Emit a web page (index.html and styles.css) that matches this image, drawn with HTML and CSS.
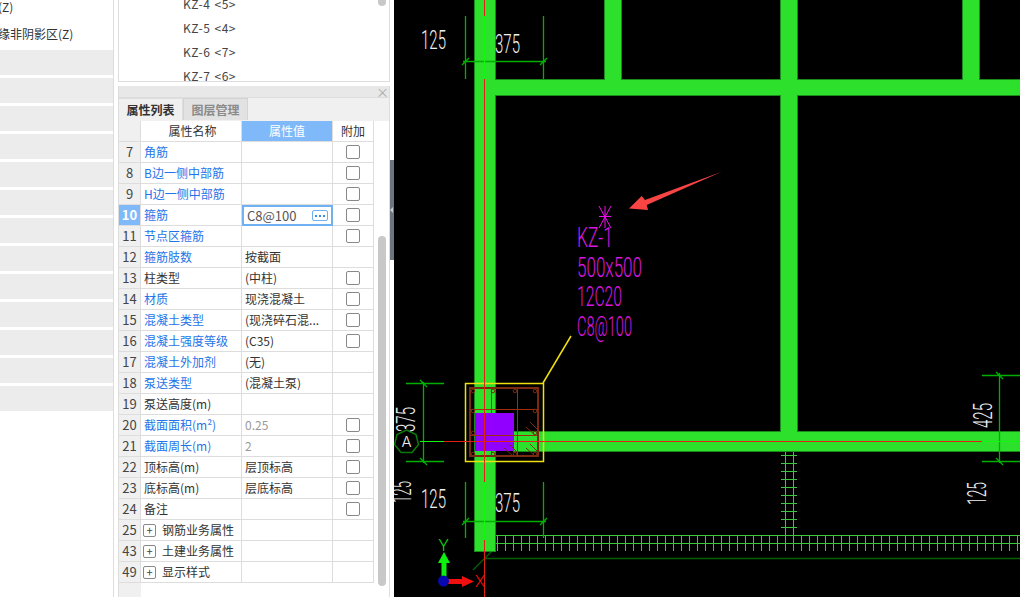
FILE: index.html
```html
<!DOCTYPE html>
<html lang="zh-CN">
<head>
<meta charset="utf-8">
<title>属性列表</title>
<link rel="stylesheet" href="styles.css">
</head>
<body>
<div class="app">
  <aside class="left">
    <div class="tree-text first">(Z)</div>
    <div class="tree-text second">缘非阴影区(Z)</div>
    <div class="bars">
      <div class="bar"></div><div class="bar"></div><div class="bar"></div><div class="bar"></div><div class="bar"></div>
      <div class="bar"></div><div class="bar"></div><div class="bar"></div><div class="bar"></div><div class="bar"></div>
      <div class="bar"></div><div class="bar"></div><div class="bar"></div>
    </div>
  </aside>
  <section class="mid">
    <div class="list">
      <div class="list-items">
        <div class="list-item">KZ-4 &lt;5&gt;</div>
        <div class="list-item">KZ-5 &lt;4&gt;</div>
        <div class="list-item">KZ-6 &lt;7&gt;</div>
        <div class="list-item">KZ-7 &lt;6&gt;</div>
      </div>
      <div class="list-thumb"></div>
    </div>
    <div class="props">
      <div class="props-head"><span class="close">×</span></div>
      <div class="tabs">
        <div class="tab active">属性列表</div>
        <div class="tab">图层管理</div>
      </div>
      <div class="props-body">
        <div class="table">
          <div class="row header"><div class="c num"></div><div class="c name center">属性名称</div><div class="c val hl">属性值</div><div class="c add center">附加</div></div>
          <div class="row"><div class="c num">7</div><div class="c name blue">角筋</div><div class="c val"></div><div class="c add"><i class="cb"></i></div></div>
          <div class="row"><div class="c num">8</div><div class="c name blue">B边一侧中部筋</div><div class="c val"></div><div class="c add"><i class="cb"></i></div></div>
          <div class="row"><div class="c num">9</div><div class="c name blue">H边一侧中部筋</div><div class="c val"></div><div class="c add"><i class="cb"></i></div></div>
          <div class="row"><div class="c num sel">10</div><div class="c name blue">箍筋</div><div class="c val editing"><span>C8@100</span><b class="more"><svg class="dots" width="10" height="2" viewBox="0 0 10 2"><rect x="0" width="2" height="2"/><rect x="4" width="2" height="2"/><rect x="8" width="2" height="2"/></svg></b></div><div class="c add"><i class="cb"></i></div></div>
          <div class="row"><div class="c num">11</div><div class="c name blue">节点区箍筋</div><div class="c val"></div><div class="c add"><i class="cb"></i></div></div>
          <div class="row"><div class="c num">12</div><div class="c name blue">箍筋肢数</div><div class="c val">按截面</div><div class="c add"></div></div>
          <div class="row"><div class="c num">13</div><div class="c name">柱类型</div><div class="c val">(中柱)</div><div class="c add"><i class="cb"></i></div></div>
          <div class="row"><div class="c num">14</div><div class="c name blue">材质</div><div class="c val">现浇混凝土</div><div class="c add"><i class="cb"></i></div></div>
          <div class="row"><div class="c num">15</div><div class="c name blue">混凝土类型</div><div class="c val">(现浇碎石混...</div><div class="c add"><i class="cb"></i></div></div>
          <div class="row"><div class="c num">16</div><div class="c name blue">混凝土强度等级</div><div class="c val">(C35)</div><div class="c add"><i class="cb"></i></div></div>
          <div class="row"><div class="c num">17</div><div class="c name blue">混凝土外加剂</div><div class="c val">(无)</div><div class="c add"></div></div>
          <div class="row"><div class="c num">18</div><div class="c name blue">泵送类型</div><div class="c val">(混凝土泵)</div><div class="c add"></div></div>
          <div class="row"><div class="c num">19</div><div class="c name">泵送高度(m)</div><div class="c val"></div><div class="c add"></div></div>
          <div class="row"><div class="c num">20</div><div class="c name blue">截面面积(m²)</div><div class="c val grey">0.25</div><div class="c add"><i class="cb"></i></div></div>
          <div class="row"><div class="c num">21</div><div class="c name blue">截面周长(m)</div><div class="c val grey">2</div><div class="c add"><i class="cb"></i></div></div>
          <div class="row"><div class="c num">22</div><div class="c name">顶标高(m)</div><div class="c val">层顶标高</div><div class="c add"><i class="cb"></i></div></div>
          <div class="row"><div class="c num">23</div><div class="c name">底标高(m)</div><div class="c val">层底标高</div><div class="c add"><i class="cb"></i></div></div>
          <div class="row"><div class="c num">24</div><div class="c name">备注</div><div class="c val"></div><div class="c add"><i class="cb"></i></div></div>
          <div class="row"><div class="c num">25</div><div class="c name"><i class="plus">+</i>钢筋业务属性</div><div class="c val"></div><div class="c add"></div></div>
          <div class="row"><div class="c num">43</div><div class="c name"><i class="plus">+</i>土建业务属性</div><div class="c val"></div><div class="c add"></div></div>
          <div class="row"><div class="c num">49</div><div class="c name"><i class="plus">+</i>显示样式</div><div class="c val"></div><div class="c add"></div></div>
          <div class="num-fill"></div>
        </div>
        <div class="scroll"><div class="scroll-thumb"></div></div>
      </div>
    </div>
  </section>
  <div class="splitter"><div class="handle"><span class="handle-arrow"></span></div></div>
  <main class="canvas">
    <svg class="drawing" viewBox="394 0 626 597" width="626" height="597" xmlns="http://www.w3.org/2000/svg">
      <defs>
        <pattern id="stripV" patternUnits="userSpaceOnUse" x="497" y="0" width="8" height="8"><rect x="0" y="0" width="1" height="8" class="hatch-fill"/></pattern>
        <pattern id="ladderH" patternUnits="userSpaceOnUse" x="0" y="455" width="8" height="8"><rect x="0" y="0" width="8" height="1" class="hatch-fill"/></pattern>
        <g id="beams">
          <rect x="475" y="0" width="20" height="551"/>
          <rect x="495" y="80" width="525" height="15"/>
          <rect x="605" y="0" width="16" height="80"/>
          <rect x="781" y="0" width="16" height="432"/>
          <rect x="963" y="0" width="16" height="80"/>
          <rect x="514" y="432" width="506" height="19"/>
        </g>
      </defs>

      <!-- hatching -->
      <rect x="781" y="451" width="16" height="84" fill="url(#ladderH)"/>
      <path class="hatch" d="M785.5 451V535M793.5 451V535M495 535.5H1020M495 543.5H1020"/>
      <rect x="497" y="535" width="523" height="16" fill="url(#stripV)"/>
      <path class="dim-dark" d="M484 558.5H1020M495 548L473 570"/>

      <!-- beams -->
      <use href="#beams" class="beam-edge"/>
      <use href="#beams" class="beam-fill"/>

      <!-- axes lines -->
      <path class="axis" d="M484.5 0V597"/>
      <path class="axis" d="M444 441.5H982"/>

      <!-- dimensions -->
      <path class="dim" d="M465.5 16V79M543.5 16V79M463 61.5H546M462 65L469 58M540 65L547 58"/>
      <path class="dim" d="M465.5 482V538M543.5 482V538M463 521.5H546M462 525L469 518M540 525L547 518"/>
      <path class="dim" d="M406 383.5H444M406 461.5H444M423.5 382V463M420 380L427 387M420 458L427 465"/>
      <path class="dim" d="M982 375.5H1020M982 461.5H1020M999.5 373V463M996 372L1003 379M996 458L1003 465"/>
      <path class="lime" d="M484.5 16V79M484.5 482V540M420 441.5H444M982 441.5H1020"/>
      <polygon class="grid-mark" points="406.5,430 416,434.5 418.5,444.5 412,452.5 401,452.5 394.5,444.5 397,434.5"/>

      <!-- column -->
      <rect class="purple" x="475" y="413" width="39" height="38"/>
      <rect class="yellow" x="465.5" y="383.5" width="78" height="78"/>
      <path class="yellow" d="M543 383L571 336"/>
      <rect class="rebar thick" x="470" y="388" width="68" height="68"/>
      <path class="rebar-bright" d="M471 409.5H537M471 435.5H537M491.5 389V456M517.5 389V456"/>
      <g class="rebar">
        <circle cx="473" cy="391" r="1.8"/><circle cx="493" cy="391" r="1.8"/><circle cx="515" cy="391" r="1.8"/><circle cx="535" cy="391" r="1.8"/>
        <circle cx="473" cy="411" r="1.8"/><circle cx="535" cy="411" r="1.8"/>
        <circle cx="473" cy="433" r="1.8"/><circle cx="535" cy="433" r="1.8"/>
        <circle cx="473" cy="454" r="1.8"/><circle cx="493" cy="454" r="1.8"/><circle cx="515" cy="454" r="1.8"/><circle cx="535" cy="454" r="1.8"/>
        <path d="M530 422L538 430M526 427L535 435M509 444L517 452M504 448L513 456M530 444L538 452M526 448L535 456"/>
      </g>
      <path class="axis" d="M484.5 383V462"/>
      <path class="axis" d="M444 441.5H544"/>

      <!-- dimension numbers -->
      <g class="cad-white">
        <text x="421" y="49" textLength="25" lengthAdjust="spacingAndGlyphs">125</text>
        <text x="495" y="53" textLength="25" lengthAdjust="spacingAndGlyphs">375</text>
        <text x="421" y="508" textLength="25" lengthAdjust="spacingAndGlyphs">125</text>
        <text x="495" y="512" textLength="25" lengthAdjust="spacingAndGlyphs">375</text>
        <text transform="translate(415 432) rotate(-90)" textLength="25" lengthAdjust="spacingAndGlyphs">375</text>
        <text transform="translate(411 503) rotate(-90)" textLength="22" lengthAdjust="spacingAndGlyphs">125</text>
        <text transform="translate(992 428) rotate(-90)" textLength="25" lengthAdjust="spacingAndGlyphs">425</text>
        <text transform="translate(986 505) rotate(-90)" textLength="23" lengthAdjust="spacingAndGlyphs">125</text>
      </g>
      <text class="grid-label" x="406.5" y="447">A</text>

      <!-- annotation -->
      <path class="star" d="M605 206V228M599 216.5H611M599 206L611 228M611 206L599 228"/>
      <g class="cad-magenta">
        <text x="577" y="247" textLength="36" lengthAdjust="spacingAndGlyphs">KZ-1</text>
        <text x="577" y="277" textLength="65" lengthAdjust="spacingAndGlyphs">500x500</text>
        <text x="577" y="306" textLength="45" lengthAdjust="spacingAndGlyphs">12C20</text>
        <text x="577" y="336" textLength="55" lengthAdjust="spacingAndGlyphs">C8@100</text>
      </g>
      <polygon class="arrow" points="721.7,171.7 645,200 641.7,196 629,208.5 648,210 646.7,205"/>

      <!-- UCS icon -->
      <rect class="y-axis" x="441.5" y="562" width="5" height="16"/>
      <polygon class="y-axis" points="444,552 450,563 438,563"/>
      <rect class="x-axis" x="447" y="579" width="16" height="5"/>
      <polygon class="x-axis" points="474,581.5 462,576 462,587"/>
      <circle class="origin" cx="443.5" cy="581" r="5.5"/>
      <text class="ucs-y" x="443.5" y="551">Y</text>
      <text class="ucs-x" x="480" y="587">X</text>
    </svg>
  </main>
</div>
</body>
</html>
```
FILE: styles.css
```css
* { box-sizing: border-box; }
html, body { margin: 0; padding: 0; height: 597px; overflow: hidden; background: #fff; }
body { font-family: "Noto Sans CJK SC", "Noto Sans", sans-serif; font-size: 12px; color: #333; }
.app { display: flex; height: 597px; width: 1020px; }

/* left tree */
.left { width: 114px; flex: none; border-right: 1px solid #ddd; overflow: hidden; }
.tree-text { white-space: nowrap; line-height: 16px; height: 16px; margin-left: -2px; }
.first { margin-top: -1px; }
.second { margin-top: 11px; }
.bars { display: flex; flex-direction: column; gap: 3px; margin-top: 8px; }
.bar { height: 25px; background: #ececec; }

/* middle */
.mid { width: 272px; margin-left: 4px; flex: none; display: flex; flex-direction: column; gap: 4px; }
.list { height: 82px; flex: none; border: 1px solid #ddd; border-top: 0; overflow: hidden; display: flex; }
.list-items { flex: 1; margin-top: -8px; padding-left: 64px; }
.list-item { height: 24px; line-height: 24px; letter-spacing: 0.5px; word-spacing: 1px; color: #444; }
.list-thumb { width: 8px; height: 6px; margin-right: 3px; background: #c8c8c8; border-radius: 0 0 4px 4px; }

.props { flex: 1; min-height: 0; display: flex; flex-direction: column; border-left: 1px solid #ddd; border-right: 1px solid #ddd; }
.props-head { height: 12px; flex: none; background: #e8e8e8; border-bottom: 1px solid #ddd; display: flex; justify-content: flex-end; }
.close { font-size: 13px; line-height: 12px; color: #aaa; }
.tabs { height: 23px; flex: none; display: flex; background: #f0f0f0; padding-bottom: 1px; }
.tab { width: 65px; line-height: 21px; text-align: center; font-weight: 700; color: #8a8a8a; background: #e2e2e2; border: 1px solid #d4d4d4; border-bottom: 0; }
.tab.active { background: #f0f0f0; color: #333; border-color: #ddd; border-left: 0; width: 64px; }

.props-body { flex: 1; min-height: 0; display: flex; }
.table { width: 255px; flex: none; display: flex; flex-direction: column; }
.row { display: flex; height: 21px; flex: none; }
.c { height: 21px; line-height: 20px; border-bottom: 1px solid #ddd; border-right: 1px solid #ddd; white-space: nowrap; overflow: hidden; }
.num { width: 22px; text-align: center; background: #f0f0f0; font-size: 13px; color: #444; }
.name { width: 101px; padding-left: 3px; display: flex; align-items: center; }
.val { width: 91px; padding-left: 3px; }
.add { width: 41px; display: flex; align-items: center; justify-content: center; }
.center { justify-content: center; text-align: center; }
.header .num { background: #f0f0f0; }
.hl { background: #7fb9f9; color: #fff; text-align: center; padding-left: 0; }
.blue { color: #1f74e8; }
.grey { color: #999; }
.sel { background: #7fb9f9; color: #fff; font-weight: 700; }
.editing { display: flex; align-items: center; justify-content: space-between; border: 2px solid #6fb1f2; padding: 0 3px; color: #555; font-size: 13px; }
.more { flex: none; width: 16px; height: 11px; border: 1px solid #6fb1f2; border-radius: 2px; display: flex; align-items: center; justify-content: center; }
.dots { display: block; fill: #3c8de6; }
.cb { display: block; width: 14px; height: 14px; border: 1px solid #888; border-radius: 2px; background: #fff; }
.plus { display: block; width: 13px; height: 13px; border: 1px solid #888; border-radius: 2px; margin-left: -1px; margin-right: 6px; font-style: normal; font-size: 11px; line-height: 10px; text-align: center; color: #444; flex: none; }
.num-fill { flex: 1; width: 22px; background: #f0f0f0; }
.scroll { width: 8px; margin-left: 4px; padding-top: 115px; }
.scroll-thumb { height: 350px; background: #c8c8c8; border-radius: 4px; }

/* splitter */
.splitter { width: 4px; flex: none; padding-top: 160px; background: #fff; }
.handle { width: 4px; height: 100px; background: #6b7680; display: flex; align-items: center; }
.handle-arrow { display: block; width: 0; height: 0; border: 3px solid transparent; border-right-color: #c8ccd0; border-left: 0; }

/* canvas */
.canvas { flex: 1; background: #000; overflow: hidden; }
.drawing { display: block; }
.beam-fill { fill: #2ce02c; }
.beam-edge { fill: none; stroke: #1a8a1a; stroke-width: 2; }
.axis { stroke: #e02010; stroke-width: 1; fill: none; }
.dim { stroke: #00b000; stroke-width: 1.3; fill: none; }
.dim-dark { stroke: #046004; stroke-width: 1.3; fill: none; }
.lime { stroke: #10f810; stroke-width: 1; fill: none; }
.hatch { stroke: #3cc83c; stroke-width: 1; fill: none; }
.hatch-fill { fill: #3cc83c; }
.grid-mark { fill: none; stroke: #0a7a0a; stroke-width: 1.5; }
.grid-label { fill: #eee; font-family: "Inter", sans-serif; font-weight: 300; font-size: 15px; text-anchor: middle; }
.purple { fill: #9100ff; }
.yellow { fill: none; stroke: #f0e010; stroke-width: 1.5; }
.rebar { fill: none; stroke: #7a2a10; stroke-width: 1; }
.rebar.thick { stroke-width: 2; }
.rebar-bright { fill: none; stroke: #a02c10; stroke-width: 1; }
.star { stroke: #f010f0; stroke-width: 1; fill: none; }
.arrow { fill: #f94444; }
.cad-white text { fill: #f0f0f0; font-family: "Roboto", sans-serif; font-weight: 300; font-size: 25px; }
.cad-magenta text { fill: #d818e0; font-family: "Roboto", sans-serif; font-weight: 300; font-size: 27px; }
.y-axis { fill: #10f010; }
.x-axis { fill: #f01010; }
.origin { fill: #0808b0; }
.ucs-y { fill: #10e010; font-family: "Roboto", sans-serif; font-weight: 300; font-size: 17px; text-anchor: middle; }
.ucs-x { fill: #f01010; font-family: "Roboto", sans-serif; font-weight: 300; font-size: 17px; text-anchor: middle; }
```
